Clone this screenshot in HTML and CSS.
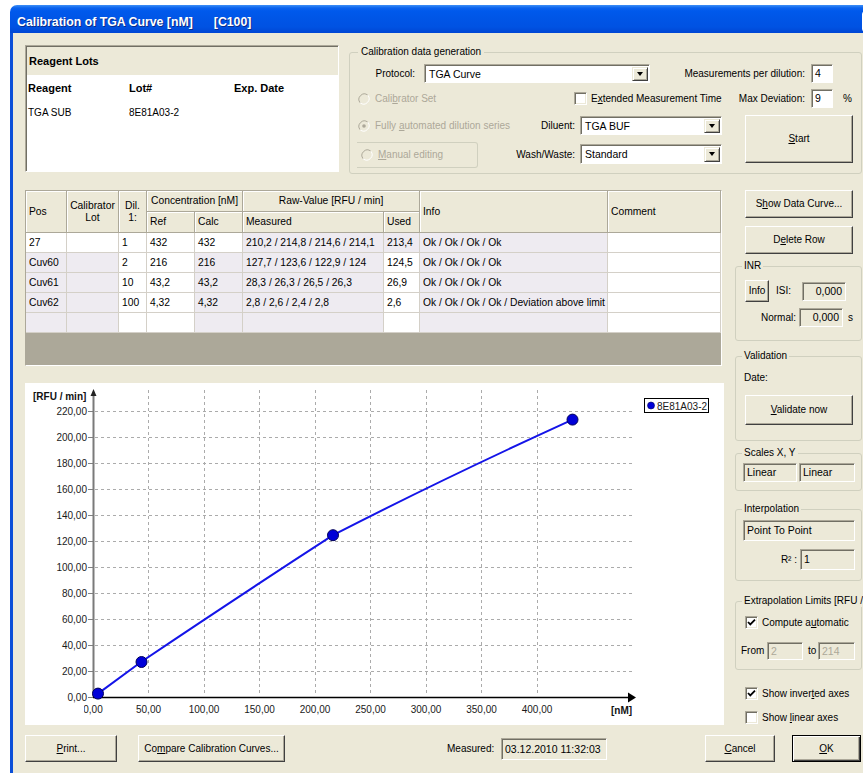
FILE: index.html
```html
<!DOCTYPE html>
<html lang="en">
<head>
<meta charset="utf-8">
<title>Calibration of TGA Curve</title>
<link rel="stylesheet" href="styles.css">
</head>
<body>
<div class="window">
  <div class="titlebar">
    <span class="title">Calibration of TGA Curve [nM]</span>
    <span class="title">[C100]</span>
    <span class="close"><svg viewBox="0 0 19 19" width="19" height="19"><path d="M5 5L14 14M14 5L5 14" stroke="#fff" stroke-width="2.2"/></svg></span>
  </div>
  <div class="client">
    <div class="top">
      <div class="lots">
        <div class="lots-cap">Reagent Lots</div>
        <div class="lots-row head"><span class="c1">Reagent</span><span class="c2">Lot#</span><span>Exp. Date</span></div>
        <div class="lots-row data"><span class="c1">TGA SUB</span><span class="c2">8E81A03-2</span><span></span></div>
      </div>

      <fieldset class="group gen">
        <legend>Calibration data generation</legend>
        <div class="row ra">
          <span class="lbl w57">Protocol:</span>
          <div class="combo w226 ml9"><span class="val">TGA Curve</span><span class="drop"></span></div>
          <span class="lbl w155">Measurements per dilution:</span>
          <div class="field white w22 ml6">4</div>
        </div>
        <div class="row rb">
          <label class="opt dis w216"><svg class="radio" viewBox="0 0 12 12"><circle cx="6" cy="6" r="5" fill="#ECE9D8"/><path d="M2.2 9.8A5.4 5.4 0 0 1 9.8 2.2" stroke="#ACA899" fill="none"/><path d="M9.8 2.2A5.4 5.4 0 0 1 2.2 9.8" stroke="#fff" fill="none"/></svg><span>Cali<u>b</u>rator Set</span></label>
          <label class="opt w164"><span class="chk"></span><span>E<u>x</u>tended Measurement Time</span></label>
          <span class="lbl w67">Max Deviation:</span>
          <div class="field white w22 ml6">9</div>
          <span class="pct">%</span>
        </div>
        <div class="rcd">
          <div class="row rc">
            <label class="opt dis w182"><svg class="radio" viewBox="0 0 12 12"><circle cx="6" cy="6" r="5" fill="#ECE9D8"/><path d="M2.2 9.8A5.4 5.4 0 0 1 9.8 2.2" stroke="#ACA899" fill="none"/><path d="M9.8 2.2A5.4 5.4 0 0 1 2.2 9.8" stroke="#fff" fill="none"/><circle cx="6" cy="6" r="1.8" fill="#ACA899"/></svg><span>Fully <u>a</u>utomated dilution series</span></label>
            <span class="lbl w35">Diluent:</span>
            <div class="combo w142 ml5"><span class="val">TGA BUF</span><span class="drop"></span></div>
          </div>
          <div class="row rd">
            <div class="subbox"><label class="opt dis"><svg class="radio" viewBox="0 0 12 12"><circle cx="6" cy="6" r="5" fill="#ECE9D8"/><path d="M2.2 9.8A5.4 5.4 0 0 1 9.8 2.2" stroke="#ACA899" fill="none"/><path d="M9.8 2.2A5.4 5.4 0 0 1 2.2 9.8" stroke="#fff" fill="none"/></svg><span><u>M</u>anual editing</span></label></div>
            <span class="lbl w97">Wash/Waste:</span>
            <div class="combo w142 ml5"><span class="val">Standard</span><span class="drop"></span></div>
          </div>
          <button class="btn start"><u>S</u>tart</button>
        </div>
      </fieldset>
    </div>

    <div class="main">
      <div class="leftcol">
        <div class="gridbox">
          <table class="grid">
            <colgroup>
              <col class="k-pos"><col class="k-lot"><col class="k-dil"><col class="k-ref"><col class="k-calc"><col class="k-meas"><col class="k-used"><col class="k-info"><col class="k-com">
            </colgroup>
            <thead>
              <tr class="h1">
                <th rowspan="2" class="l">Pos</th>
                <th rowspan="2">Calibrator<br>Lot</th>
                <th rowspan="2">Dil.<br>1:</th>
                <th colspan="2">Concentration [nM]</th>
                <th colspan="2">Raw-Value [RFU / min]</th>
                <th rowspan="2" class="l">Info</th>
                <th rowspan="2" class="l">Comment</th>
              </tr>
              <tr class="h2">
                <th class="l">Ref</th><th class="l">Calc</th><th class="l">Measured</th><th class="l">Used</th>
              </tr>
            </thead>
            <tbody>
              <tr><td>27</td><td></td><td>1</td><td>432</td><td>432</td><td class="ro">210,2 / 214,8 / 214,6 / 214,1</td><td class="ro">213,4</td><td class="ro">Ok / Ok / Ok / Ok</td><td></td></tr>
              <tr><td class="ro">Cuv60</td><td class="ro"></td><td>2</td><td>216</td><td class="ro">216</td><td class="ro">127,7 / 123,6 / 122,9 / 124</td><td>124,5</td><td class="ro">Ok / Ok / Ok / Ok</td><td></td></tr>
              <tr><td class="ro">Cuv61</td><td class="ro"></td><td>10</td><td>43,2</td><td class="ro">43,2</td><td class="ro">28,3 / 26,3 / 26,5 / 26,3</td><td>26,9</td><td class="ro">Ok / Ok / Ok / Ok</td><td></td></tr>
              <tr><td class="ro">Cuv62</td><td class="ro"></td><td>100</td><td>4,32</td><td class="ro">4,32</td><td class="ro">2,8 / 2,6 / 2,4 / 2,8</td><td>2,6</td><td class="ro">Ok / Ok / Ok / Ok / Deviation above limit</td><td></td></tr>
              <tr><td class="ro"></td><td class="ro"></td><td></td><td></td><td class="ro"></td><td class="ro"></td><td></td><td class="ro"></td><td></td></tr>
            </tbody>
          </table>
        </div>

        <div class="chart">
          <svg width="699" height="342" viewBox="0 0 699 342">
            <defs>
              <clipPath id="plot-left"><rect x="59" y="0" width="640" height="342"/></clipPath>
            </defs>
            <g stroke="#ABABAB" stroke-width="1" stroke-dasharray="3 3" fill="none">
              <path d="M70 288.5H608M70 262.5H608M70 236.5H608M70 210.5H608M70 184.5H608M70 158.5H608M70 132.5H608M70 106.5H608M70 80.5H608M70 54.5H608M70 28.5H608"/>
              <path d="M123.5 7V313M179.5 7V313M234.5 7V313M290.5 7V313M345.5 7V313M401.5 7V313M456.5 7V313M512.5 7V313"/>
            </g>
            <path d="M63 314.5H68M63 288.5H68M63 262.5H68M63 236.5H68M63 210.5H68M63 184.5H68M63 158.5H68M63 132.5H68M63 106.5H68M63 80.5H68M63 54.5H68M63 28.5H68" stroke="#808080" stroke-width="1"/>
            <g class="tick" text-anchor="end">
              <text x="62" y="318">0,00</text>
              <text x="62" y="292">20,00</text>
              <text x="62" y="266">40,00</text>
              <text x="62" y="240">60,00</text>
              <text x="62" y="214">80,00</text>
              <text x="62" y="188">100,00</text>
              <text x="62" y="162">120,00</text>
              <text x="62" y="136">140,00</text>
              <text x="62" y="110">160,00</text>
              <text x="62" y="84">180,00</text>
              <text x="62" y="58">200,00</text>
              <text x="62" y="32">220,00</text>
            </g>
            <g class="tick" text-anchor="middle" clip-path="url(#plot-left)">
              <text x="68" y="330">0,00</text>
              <text x="123.5" y="330">50,00</text>
              <text x="179" y="330">100,00</text>
              <text x="234.5" y="330">150,00</text>
              <text x="290" y="330">200,00</text>
              <text x="345.5" y="330">250,00</text>
              <text x="401" y="330">300,00</text>
              <text x="456.5" y="330">350,00</text>
              <text x="512" y="330">400,00</text>
            </g>
            <text class="axis-title" x="8" y="17">[RFU / min]</text>
            <text class="axis-title" x="586" y="331">[nM]</text>
            <path d="M68.5 10V314" stroke="#7A7A7A" stroke-width="2"/>
            <path d="M65.5 13L68.5 6L71.5 13Z" fill="#222"/>
            <path d="M68 314.5H604" stroke="#000" stroke-width="1.6"/>
            <path d="M603 309.5L611 314.5L603 319.5Z" fill="#000"/>
            <path d="M73 310.6L116 279C180 236 245 193 308 152.2C390 110 470 72 547.5 36.6" fill="none" stroke="#1414E8" stroke-width="2" stroke-linejoin="round"/>
            <g fill="#0000D8" stroke="#00005A" stroke-width="1">
              <circle cx="73" cy="310.6" r="5.5"/>
              <circle cx="116.5" cy="279" r="5.5"/>
              <circle cx="308" cy="152.2" r="5.5"/>
              <circle cx="547.5" cy="36.6" r="5.5"/>
            </g>
            <rect x="619.5" y="15.5" width="64" height="14" fill="#fff" stroke="#000"/>
            <circle cx="626" cy="22.5" r="3.5" fill="#0000D8" stroke="#00005A" stroke-width="0.6"/>
            <text class="tick" x="632" y="26.5">8E81A03-2</text>
          </svg>
        </div>
      </div>

      <div class="rightcol">
        <button class="btn side">S<u>h</u>ow Data Curve...</button>
        <button class="btn side del">D<u>e</u>lete Row</button>

        <fieldset class="group side-group inr">
          <legend>INR</legend>
          <div class="row inr1">
            <button class="btn info">Info</button>
            <span class="isi">ISI:</span>
            <div class="field ro r w44">0,000</div>
          </div>
          <div class="row inr2">
            <span class="lbl w54">Normal:</span>
            <div class="field ro r w44">0,000</div>
            <span class="unit">s</span>
          </div>
        </fieldset>

        <fieldset class="group side-group valid">
          <legend>Validation</legend>
          <div class="date">Date:</div>
          <button class="btn validate"><u>V</u>alidate now</button>
        </fieldset>

        <fieldset class="group side-group scales">
          <legend>Scales X, Y</legend>
          <div class="row scl">
            <div class="field ro w54">Linear</div>
            <div class="field ro w56 ml2">Linear</div>
          </div>
        </fieldset>

        <fieldset class="group side-group interp">
          <legend>Interpolation</legend>
          <div class="field ro w112 tall pt">Point To Point</div>
          <div class="row r2">
            <span class="lbl w57">R² :</span>
            <div class="field ro w55 tall">1</div>
          </div>
        </fieldset>

        <fieldset class="group side-group extrap">
          <legend>Extrapolation Limits [RFU / min]</legend>
          <label class="opt ck1"><span class="chk"><svg viewBox="0 0 11 11" width="11" height="11"><path d="M2 5L4.3 7.4L9 2.6" stroke="#000" stroke-width="1.8" fill="none"/></svg></span><span>Compute a<u>u</u>tomatic</span></label>
          <div class="row lim">
            <span class="from">From</span>
            <div class="field ro dim w36">2</div>
            <span class="to">to</span>
            <div class="field ro dim w37">214</div>
          </div>
        </fieldset>

        <label class="opt ck2"><span class="chk"><svg viewBox="0 0 11 11" width="11" height="11"><path d="M2 5L4.3 7.4L9 2.6" stroke="#000" stroke-width="1.8" fill="none"/></svg></span><span>Show inver<u>t</u>ed axes</span></label>
        <label class="opt ck3"><span class="chk"></span><span>Show <u>l</u>inear axes</span></label>
      </div>
    </div>

    <div class="bottom">
      <button class="btn print"><u>P</u>rint...</button>
      <button class="btn compare">Co<u>m</u>pare Calibration Curves...</button>
      <span class="measured">Measured:</span>
      <div class="field ro stamp">03.12.2010 11:32:03</div>
      <button class="btn cancel"><u>C</u>ancel</button>
      <button class="btn ok"><u>O</u>K</button>
    </div>
  </div>
</div>
</body>
</html>
```

FILE: styles.css
```css
* { box-sizing: border-box; }

html, body {
  margin: 0;
  padding: 0;
  overflow: hidden;
}

body {
  width: 863px;
  height: 773px;
  background: #fff;
  font: 10px/12px "Liberation Sans", Arial, sans-serif;
  color: #000;
}

u { text-decoration: underline; text-underline-offset: 1px; }

/* ---------- window frame ---------- */
.window {
  margin: 5px 0 0 10px;
  width: 880px;
}

.titlebar {
  height: 28px;
  display: flex;
  align-items: flex-start;
  padding-left: 7px;
  border-top-left-radius: 7px;
  color: #fff;
  background: linear-gradient(180deg, #3D8FF6 0, #0B63EE 3px, #0059EC 6px, #0055E6 14px, #0052E2 22px, #0046D4 28px);
}

.title {
  font-weight: bold;
  font-size: 12.3px;
  line-height: 16px;
  margin-top: 9px;
  white-space: pre;
  text-shadow: 1px 1px 0 #0C2C8A;
}

.title + .title { margin-left: 21px; }

.close {
  margin-left: auto;
  margin-right: 7px;
  margin-top: 6px;
  width: 21px;
  height: 21px;
  border: 1px solid #fff;
  border-radius: 3px;
  background: linear-gradient(135deg, #F2A080 0, #E0582C 45%, #C63E18 100%);
  display: flex;
  align-items: center;
  justify-content: center;
}

.client {
  height: 745px;
  background: #ECE9D8;
  border-left: 3px solid #0B4FD8;
  padding: 12px 0 0 12px;
}

/* ---------- common controls ---------- */
.btn {
  font: inherit;
  color: #000;
  margin: 0;
  padding: 0;
  background: #ECE9D8;
  border: 1px solid;
  border-color: #fff #404040 #404040 #fff;
  box-shadow: inset -1px -1px 0 #ACA899;
  text-align: center;
  cursor: default;
}

.row { display: flex; align-items: center; }

.lbl { text-align: right; white-space: nowrap; }

.w22 { width: 22px; }
.w35 { width: 35px; }
.w36 { width: 36px; }
.w37 { width: 37px; }
.w44 { width: 44px; }
.w54 { width: 54px; }
.w55 { width: 55px; }
.w56 { width: 56px; }
.w57 { width: 57px; }
.w67 { width: 67px; }
.w97 { width: 97px; }
.w112 { width: 112px; }
.w142 { width: 142px; }
.w155 { width: 155px; }
.w164 { width: 164px; }
.w182 { width: 182px; }
.w216 { width: 216px; }
.w226 { width: 226px; }
.ml2 { margin-left: 2px; }
.ml5 { margin-left: 5px; }
.ml6 { margin-left: 6px; }
.ml9 { margin-left: 9px; }

.field {
  height: 19px;
  border: 1px solid;
  border-color: #ACA899 #fff #fff #ACA899;
  box-shadow: inset 1px 1px 0 #716F64;
  padding: 0 3px 0 3px;
  line-height: 17px;
  font-size: 10.5px;
  white-space: nowrap;
  overflow: hidden;
}
.field.white { background: #fff; }
.field.ro { background: #ECE9D8; }
.field.r { text-align: right; }
.field.dim { color: #ACA899; }
.field.tall { height: 21px; line-height: 19px; }

.combo {
  display: flex;
  height: 19px;
  background: #fff;
  border: 1px solid;
  border-color: #ACA899 #fff #fff #ACA899;
  box-shadow: inset 1px 1px 0 #716F64;
  padding: 2px 1px 1px 2px;
}
.combo .val {
  flex: 1;
  padding-left: 2px;
  font-size: 10.5px;
  line-height: 14px;
}
.combo .drop {
  width: 16px;
  background: #ECE9D8;
  border: 1px solid;
  border-color: #ECE9D8 #404040 #404040 #ECE9D8;
  box-shadow: inset 1px 1px 0 #fff, inset -1px -1px 0 #ACA899;
  display: flex;
  align-items: center;
  justify-content: center;
}
.combo .drop::after {
  content: "";
  border-left: 3.5px solid transparent;
  border-right: 3.5px solid transparent;
  border-top: 4px solid #000;
}

.opt { display: flex; align-items: center; white-space: nowrap; }
.opt.dis { color: #ACA899; }
.radio { width: 12px; height: 12px; margin-right: 5px; flex: none; }

.chk {
  width: 13px;
  height: 13px;
  flex: none;
  margin-right: 4px;
  background: #fff;
  border: 1px solid;
  border-color: #ACA899 #fff #fff #ACA899;
  box-shadow: inset 1px 1px 0 #716F64, inset -1px -1px 0 #ECE9D8;
  display: flex;
  align-items: center;
  justify-content: center;
}
.chk svg { display: block; }

fieldset.group {
  margin: 0;
  padding: 0 0 0 8px;
  border: 1px solid #D0D0BF;
  border-radius: 3px;
  min-width: 0;
}
fieldset.group > legend {
  padding: 0 3px;
  font-size: 10px;
  line-height: 12px;
  white-space: nowrap;
}

/* ---------- top area ---------- */
.top {
  display: flex;
  align-items: flex-start;
  height: 129px;
}

.lots {
  width: 314px;
  height: 127px;
  background: #fff;
  border: 1px solid;
  border-color: #ACA899 #fff #fff #ACA899;
  box-shadow: inset 1px 1px 0 #716F64;
  padding: 1px 0 0 1px;
}
.lots-cap {
  height: 28px;
  background: #ECE9D8;
  font-weight: bold;
  font-size: 11px;
  line-height: 28px;
  padding-left: 2px;
}
.lots-row { display: flex; padding-left: 1px; }
.lots-row .c1 { width: 101px; }
.lots-row .c2 { width: 105px; }
.lots-row.head { font-weight: bold; font-size: 11px; margin-top: 7px; line-height: 12px; }
.lots-row.data { margin-top: 13px; line-height: 12px; }

.gen {
  width: 513px;
  height: 128px;
  margin-left: 10px !important;
  margin-top: 1px !important;
}
.ra { margin-top: 6px; height: 19px; }
.rb { margin-top: 6px; height: 19px; }
.pct { margin-left: 10px; }
.rcd {
  display: grid;
  grid-template-columns: 364px 108px;
  column-gap: 23px;
  margin-top: 8px;
}
.rc { height: 19px; grid-column: 1; grid-row: 1; }
.rd { grid-column: 1; grid-row: 2; margin-top: 7px; height: 26px; }
.subbox {
  width: 121px;
  height: 26px;
  margin-left: -1px;
  border: 1px solid #D0D0BF;
  border-left: 0;
  border-radius: 0 3px 3px 0;
  display: flex;
  align-items: center;
  padding-left: 4px;
}
.rd .combo { height: 20px; margin-top: -3px; }
.btn.start {
  grid-column: 2;
  grid-row: 1 / span 2;
  height: 48px;
  margin-top: -1px;
}

/* ---------- main area ---------- */
.main {
  display: grid;
  grid-template-columns: 699px 127px;
  column-gap: 11px;
  margin-top: 16px;
  height: 535px;
}

.gridbox {
  width: 697px;
  height: 176px;
  background: #ACA899;
  border: 1px solid;
  border-color: #ACA899 #fff #fff #ACA899;
  overflow: hidden;
}

table.grid {
  border-collapse: separate;
  border-spacing: 0;
  table-layout: fixed;
  width: 695px;
  font-size: 10.3px;
  line-height: 12px;
}
.k-pos { width: 41px; }
.k-lot { width: 52px; }
.k-dil { width: 28px; }
.k-ref { width: 48px; }
.k-calc { width: 48px; }
.k-meas { width: 141px; }
.k-used { width: 36px; }
.k-info { width: 188px; }
.k-com { width: 113px; }

.grid th {
  background: #ECE9D8;
  font-weight: normal;
  text-align: center;
  padding: 0 3px;
  border-right: 1px solid #ACA899;
  border-bottom: 1px solid #ACA899;
  box-shadow: inset 1px 1px 0 #fff;
  white-space: nowrap;
  overflow: hidden;
}
.grid th.l { text-align: left; }
.grid tr.h1 th { height: 21px; }
.grid tr.h2 th { height: 21px; }

.grid td {
  height: 20px;
  background: #fff;
  padding: 0 2px 0 3px;
  border-right: 1px solid #D4D0C8;
  border-bottom: 1px solid #D4D0C8;
  white-space: nowrap;
  overflow: hidden;
}
.grid td.ro { background: #EEEBF1; }

.chart {
  width: 699px;
  height: 342px;
  margin-top: 17px;
  background: #fff;
}
.chart svg { display: block; }
.chart .tick, .chart .tick text {
  font-family: "Liberation Sans", Arial, sans-serif;
  font-size: 10px;
  fill: #1A1A1A;
}
.chart .axis-title {
  font-family: "Liberation Sans", Arial, sans-serif;
  font-size: 10px;
  font-weight: bold;
  fill: #111;
}

/* ---------- right column ---------- */
.rightcol {
  display: flex;
  flex-direction: column;
  align-items: flex-start;
}
.rightcol > * { flex-shrink: 0; }

.btn.side {
  width: 108px;
  height: 28px;
  margin-left: 10px;
}
.btn.side.del { margin-top: 8px; }

.side-group {
  width: 127px;
  padding-left: 6px !important;
}
.side-group > legend { padding: 0 2px !important; }

.inr { height: 81px; margin-top: 6px !important; }
.inr1 { margin-top: 8px; }
.btn.info { width: 24px; height: 22px; margin-left: 3px; }
.isi { width: 33px; padding-left: 7px; }
.inr2 { margin-top: 6px; margin-left: 3px; }
.inr2 .lbl { padding-right: 3px; }
.unit { margin-left: 5px; }

.valid { height: 91px; margin-top: 9px !important; }
.date { margin-top: 10px; margin-left: 2px; }
.btn.validate { width: 108px; height: 30px; margin-top: 11px; margin-left: 3px; }

.scales { height: 44px; margin-top: 6px !important; }
.scl { margin-top: 4px; margin-left: 1px; }

.interp { height: 78px; margin-top: 12px !important; }
.interp .pt { margin-top: 5px; margin-left: 1px; }
.r2 { margin-top: 8px; margin-left: 1px; }
.r2 .lbl { width: 57px; padding-right: 3px; }

.extrap { height: 75px; margin-top: 14px !important; }
.ck1 { margin-top: 9px; margin-left: 3px; }
.lim { margin-top: 13px; margin-left: -1px; height: 18px; }
.lim .field { height: 18px; line-height: 16px; }
.from { width: 26px; }
.to { width: 15px; padding-left: 5px; }

.ck2 { margin-top: 17px; margin-left: 10px; }
.ck3 { margin-top: 11px; margin-left: 10px; }

/* ---------- bottom row ---------- */
.bottom {
  display: flex;
  align-items: flex-start;
  margin-top: 10px;
}
.bottom .btn { height: 27px; }
.btn.print { width: 92px; }
.btn.compare { width: 147px; margin-left: 21px; }
.measured { width: 54px; margin-left: 162px; margin-top: 8px; }
.stamp { width: 106px; height: 22px; line-height: 20px; margin-top: 3px; }
.btn.cancel { width: 70px; margin-left: 98px; }
.btn.ok {
  width: 69px;
  margin-left: 17px;
  border: 1px solid #000;
  box-shadow: inset 1px 1px 0 #fff, inset -1px -1px 0 #404040, inset -2px -2px 0 #ACA899;
}
```
